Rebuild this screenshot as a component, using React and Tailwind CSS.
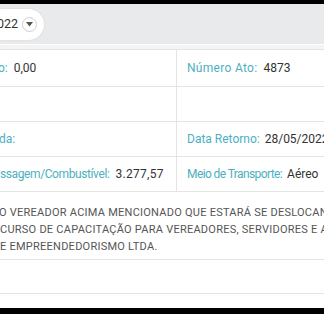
const label = "text-[#4db0c1]";
const value = "text-[#333]";

export default function App() {
    return (
        <div className="w-[324px] h-[314px] bg-black overflow-hidden font-['Roboto',sans-serif] text-[12px]">
            <div className="h-[4px]" />
            <div className="bg-white h-[304px] flex flex-col">
                {/* barra de filtro */}
                <div className="h-[40px] bg-[#e9eaec] flex items-center">
                    <div className="h-[31px] w-[56px] -ml-[12px] bg-white rounded-full shadow-[0_0_2px_rgba(0,0,0,0.12)] flex items-center pl-[10px] gap-[4px]">
                        <span className="text-[12.5px] text-[#333] -ml-[1px]">022</span>
                        <span className="w-[15px] h-[15px] rounded-full border border-[#cfcfcf] flex items-center justify-center">
                            <svg width="7" height="5" viewBox="0 0 7 5"><path d="M0 0h7L3.5 4.5z" fill="#555" /></svg>
                        </span>
                    </div>
                </div>
                <div className="h-[6px] border-t border-t-white border-b border-b-[#e4e4e4] bg-[#f3f4f5]" />

                <div className="grid grid-cols-[177px_1fr] h-[37px] border-b border-[#e4e4e4]">
                    <div className="flex items-center border-r border-[#e4e4e4] whitespace-nowrap">
                        <span className={`${label} -ml-[2px]`}>o:</span>
                        <span className={`${value} ml-[6px]`}>0,00</span>
                    </div>
                    <div className="flex items-center pl-[10px] whitespace-nowrap">
                        <span className={`${label} tracking-[0.3px]`}>Número Ato:</span>
                        <span className={`${value} ml-[6px]`}>4873</span>
                    </div>
                </div>

                <div className="grid grid-cols-[177px_1fr] h-[35px] border-b border-[#e4e4e4]">
                    <div className="border-r border-[#e4e4e4]" />
                    <div />
                </div>

                <div className="grid grid-cols-[177px_1fr] h-[35px] border-b border-[#e4e4e4]">
                    <div className="flex items-center border-r border-[#e4e4e4] whitespace-nowrap">
                        <span className={`${label} -ml-[1px]`}>da:</span>
                    </div>
                    <div className="flex items-center pl-[10px] whitespace-nowrap">
                        <span className={label}>Data Retorno:</span>
                        <span className={`${value} ml-[5px]`}>28/05/2022</span>
                    </div>
                </div>

                <div className="grid grid-cols-[177px_1fr] h-[35px] border-b border-[#e4e4e4]">
                    <div className="flex items-center border-r border-[#e4e4e4] whitespace-nowrap">
                        <span className={`${label} tracking-[-0.4px]`}>ssagem/Combustível:</span>
                        <span className={`${value} ml-[6px] tracking-[0.3px]`}>3.277,57</span>
                    </div>
                    <div className="flex items-center pl-[10px] whitespace-nowrap">
                        <span className={`${label} tracking-[-0.6px]`}>Meio de Transporte:</span>
                        <span className={`${value} ml-[5px]`}>Aéreo</span>
                    </div>
                </div>

                <div className="h-[68px] border-b border-[#e4e4e4] pt-[12px] text-[11px] leading-[17px] tracking-[0.25px] text-[#555] uppercase whitespace-nowrap">
                    <p className="-ml-[1px]">O vereador acima mencionado que estará se deslocando</p>
                    <p>curso de capacitação para vereadores, servidores e assessores</p>
                    <p>e empreendedorismo ltda.</p>
                </div>

                <div className="h-[34px] border-b border-[#e4e4e4]" />
            </div>
        </div>
    );
}
